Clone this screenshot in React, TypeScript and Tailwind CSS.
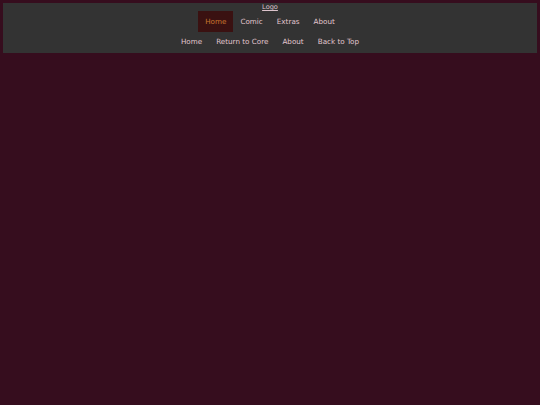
import React from "react";

const top = ["Home", "Comic", "Extras", "About"];
const bottom = ["Home", "Return to Core", "About", "Back to Top"];

export default function App() {
  return (
    <div
      className="w-[540px] h-[405px] bg-[#360d1e] p-[3px]"
      style={{ fontFamily: '"DejaVu Sans", Verdana, sans-serif' }}
    >
      <div className="bg-[#333333] flex flex-col items-center pb-[1px]">
        <a className="text-[6.6px] leading-[8px] text-[#dcc4cc] underline">Logo</a>
        <nav className="flex h-[21px]">
          {top.map((t, i) => (
            <span
              key={t}
              className={
                "px-[7px] pt-[1px] text-[7.2px] flex items-center " +
                (i === 0 ? "bg-[#3a1111] text-[#c9762e]" : "text-[#e2c6cf]")
              }
            >
              {t}
            </span>
          ))}
        </nav>
        <nav className="flex h-[20px]">
          {bottom.map((t) => (
            <span key={t} className="px-[7px] pt-[1px] text-[7.2px] flex items-center text-[#e2c6cf]">
              {t}
            </span>
          ))}
        </nav>
      </div>
    </div>
  );
}
